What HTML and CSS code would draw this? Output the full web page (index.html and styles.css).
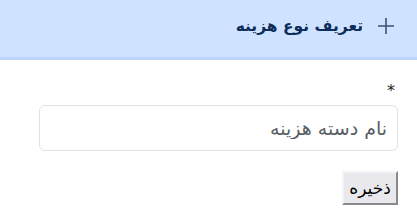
FILE: index.html
```html
<!DOCTYPE html>
<html lang="fa" dir="rtl">
<head>
  <meta charset="UTF-8">
  <meta name="viewport" content="width=device-width, initial-scale=1.0">
  <title>تعریف نوع هزینه</title>
  <link rel="stylesheet" href="styles.css">
</head>
<body>
  <div class="card-header">
    <svg class="plus-icon" width="18" height="18" viewBox="0 0 18 18">
      <path d="M9 1v16M1 9h16" stroke="#3b5275" stroke-width="1.6" fill="none"/>
    </svg>
    <span class="title">تعریف نوع هزینه</span>
  </div>

  <form class="card-body">
    <div class="input-section">
      <label for="name" class="required">*</label>
      <input type="text" id="name" class="form-control" placeholder="نام دسته هزینه">
    </div>
    <button type="button" class="save-button">ذخیره</button>
  </form>
</body>
</html>
```

FILE: styles.css
```css
body {
  margin: 0;
  font-family: 'DejaVu Sans', sans-serif;
  background-color: #fff;
  color: #212529;
}

.card-header {
  display: flex;
  align-items: center;
  gap: 14px;
  height: 60px;
  padding-right: 22px;
  padding-bottom: 6px;
  box-sizing: border-box;
  background-color: #cfe2ff;
  border-bottom: 3px solid #bcd6fe;
}

.plus-icon {
  display: block;
}

.title {
  font-size: 15.5px;
  font-weight: bold;
  color: #0c2d5a;
}

.card-body {
  padding: 21px 19px 0 19px;
}

.input-section {
  margin-bottom: 20px;
}

.required {
  display: block;
  font-size: 16px;
  line-height: 20px;
  padding-right: 3px;
  margin-bottom: 4px;
  color: #212529;
}

.form-control {
  display: block;
  width: 359px;
  height: 46px;
  box-sizing: border-box;
  padding: 0 10px;
  font-family: 'DejaVu Sans', sans-serif;
  font-size: 19px;
  border: 1px solid #dee2e6;
  border-radius: 6px;
  direction: rtl;
}

.form-control::placeholder {
  color: #595f65;
}

.save-button {
  height: 34px;
  width: 56px;
  padding: 0;
  font-family: 'DejaVu Sans', sans-serif;
  font-size: 17px;
  color: #000;
  background-color: #e9e9ed;
  border: 2px solid;
  border-color: #f4f4f6 #8a8a8e #8a8a8e #f4f4f6;
}
```
